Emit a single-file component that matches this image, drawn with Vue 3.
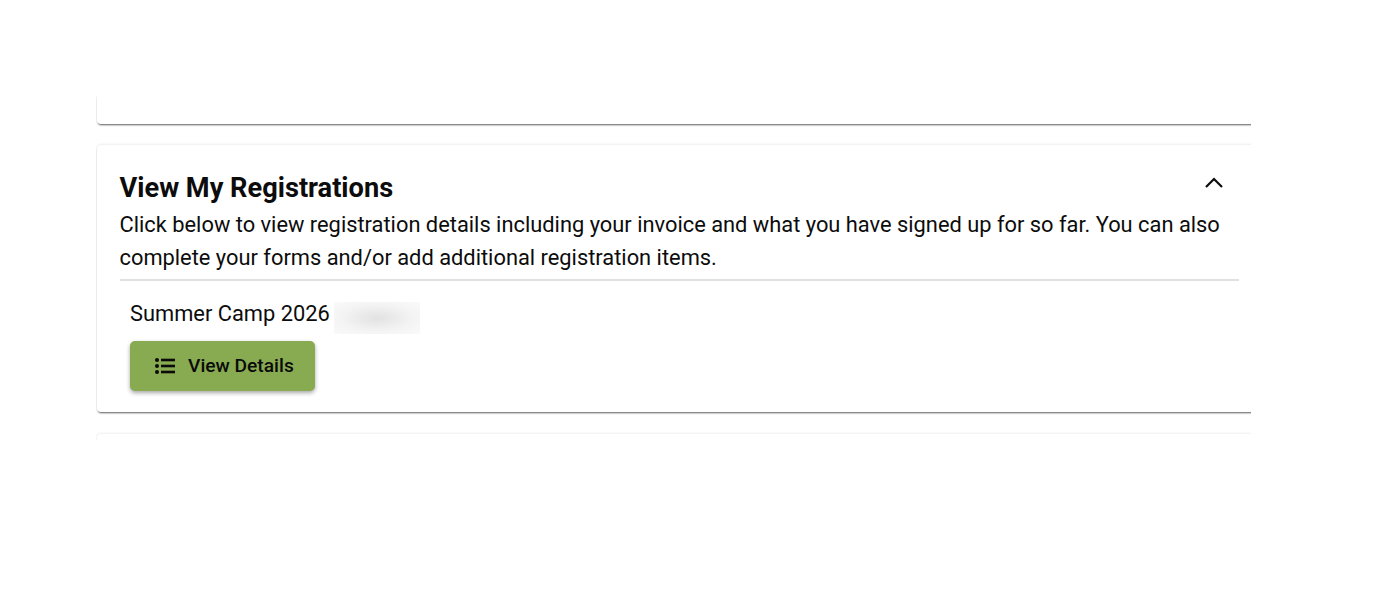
<script setup>
const description =
  "Click below to view registration details including your invoice and what you have signed up for so far. You can also complete your forms and/or add additional registration items.";
</script>

<template>
  <div class="page">
    <div class="panels">
      <div class="card card-prev"></div>

      <section class="card card-main">
        <div class="card-head">
          <h2>View My Registrations</h2>
          <svg class="chevron" viewBox="0 0 24 24" aria-hidden="true">
            <polyline points="4,16 12,8 20,16" />
          </svg>
        </div>
        <p class="desc">{{ description }}</p>
        <hr />
        <div class="reg">
          <div class="reg-name">
            <span>Summer Camp 2026</span>
            <span class="blur"></span>
          </div>
          <button class="btn" type="button">
            <svg viewBox="0 0 20 16" aria-hidden="true">
              <circle cx="2" cy="2" r="2" />
              <circle cx="2" cy="8" r="2" />
              <circle cx="2" cy="14" r="2" />
              <rect x="6" y="0.7" width="14" height="2.6" />
              <rect x="6" y="6.7" width="14" height="2.6" />
              <rect x="6" y="12.7" width="14" height="2.6" />
            </svg>
            View Details
          </button>
        </div>
      </section>

      <div class="card card-next"></div>
    </div>
  </div>
</template>

<style>
html,
body {
  background: #fff;
}
</style>

<style scoped>
.page {
  height: 601px;
  padding: 96px 149px 0 97px;
  box-sizing: border-box;
  font-family: Roboto, "Liberation Sans", sans-serif;
  color: #0c0c0c;
}

.panels {
  height: 344px;
  overflow: hidden;
  display: flex;
  flex-direction: column;
  gap: 21px;
  padding: 0 0 0 1px;
  margin-left: -1px;
}

.card {
  flex: none;
  background: #fff;
  border-radius: 4px;
  margin-right: -8px;
  box-shadow: 0 2px 2px -1px rgba(0, 0, 0, 0.6), 0 0 3px rgba(0, 0, 0, 0.14);
}

.card-prev {
  height: 28px;
  border-radius: 0 0 4px 4px;
}

.card-main {
  height: 267px;
  box-sizing: border-box;
  padding: 25px 20px 0 22.5px;
}

.card-next {
  height: 40px;
  margin-top: 1px;
  box-shadow: 0 0 3px rgba(0, 0, 0, 0.14);
}

.card-head {
  display: flex;
  justify-content: space-between;
  align-items: flex-start;
}

h2 {
  margin: 1px 0 0;
  font-size: 27.2px;
  line-height: 34px;
  font-weight: 700;
}

.chevron {
  width: 24px;
  height: 24px;
  margin: 1px 13px 0 0;
  fill: none;
  stroke: #0c0c0c;
  stroke-width: 2.2;
}

.desc {
  margin: 3px 0 0;
  font-size: 21.85px;
  line-height: 33px;
}

hr {
  margin: 5px 0 0;
  height: 2px;
  border: 0;
  background: #e0e0e0;
}

.reg {
  padding: 21px 0 0 10.5px;
}

.reg-name {
  display: flex;
  align-items: flex-start;
  gap: 4px;
  height: 32px;
  font-size: 21.85px;
  line-height: 24px;
}

.blur {
  width: 86px;
  height: 32px;
  background: radial-gradient(ellipse at center, #e2e2e2 0%, #f4f4f4 60%, #fafafa 100%);
}

.btn {
  margin-top: 7px;
  width: 185px;
  height: 50px;
  padding: 0 0 1px 25px;
  display: flex;
  align-items: center;
  gap: 13px;
  border: 0;
  border-radius: 5px;
  background: #88aa50;
  color: #0a0a0a;
  font-family: inherit;
  font-size: 19.2px;
  font-weight: 500;
  box-shadow: 0 2px 4px rgba(0, 0, 0, 0.35);
}

.btn svg {
  width: 20px;
  height: 16px;
  fill: currentColor;
}
</style>
